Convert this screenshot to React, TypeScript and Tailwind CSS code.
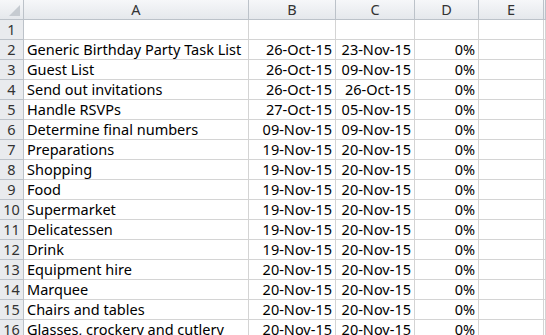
import React from 'react';

type Row = [string, string, string, string];

const rows: Row[] = [
  ['', '', '', ''],
  ['Generic Birthday Party Task List', '26-Oct-15', '23-Nov-15', '0%'],
  ['Guest List', '26-Oct-15', '09-Nov-15', '0%'],
  ['Send out invitations', '26-Oct-15', '26-Oct-15', '0%'],
  ['Handle RSVPs', '27-Oct-15', '05-Nov-15', '0%'],
  ['Determine final numbers', '09-Nov-15', '09-Nov-15', '0%'],
  ['Preparations', '19-Nov-15', '20-Nov-15', '0%'],
  ['Shopping', '19-Nov-15', '20-Nov-15', '0%'],
  ['Food', '19-Nov-15', '20-Nov-15', '0%'],
  ['Supermarket', '19-Nov-15', '20-Nov-15', '0%'],
  ['Delicatessen', '19-Nov-15', '20-Nov-15', '0%'],
  ['Drink', '19-Nov-15', '20-Nov-15', '0%'],
  ['Equipment hire', '20-Nov-15', '20-Nov-15', '0%'],
  ['Marquee', '20-Nov-15', '20-Nov-15', '0%'],
  ['Chairs and tables', '20-Nov-15', '20-Nov-15', '0%'],
  ['Glasses, crockery and cutlery', '20-Nov-15', '20-Nov-15', '0%'],
];

const cols = 'grid grid-cols-[24px_225px_87px_79px_64px_65px_1fr]';
const cell = 'h-[20px] border-r border-b border-[#d4d4d4] whitespace-nowrap overflow-hidden leading-[19px]';
const head = 'h-[20px] border-r border-b border-[#bcc2c9] bg-gradient-to-b from-[#f6f7f9] to-[#e5e8ec] text-[#333] text-center leading-[19px]';

export default function App() {
  return (
    <div className="w-[546px] h-[335px] overflow-hidden bg-white text-[14.5px] text-black" style={{ fontFamily: '"Noto Sans", "Open Sans", sans-serif' }}>
      {/* Column headers */}
      <div className={cols}>
        <div className={`${head} relative`}>
          <span className="absolute right-[3px] bottom-[3px] w-0 h-0 border-l-[11px] border-l-transparent border-b-[11px] border-b-[#c6cbd1]" />
        </div>
        {['A', 'B', 'C', 'D', 'E', ''].map((c, i) => (
          <div key={i} className={head}>{c}</div>
        ))}
      </div>

      {/* Rows */}
      {rows.map((r, i) => (
        <div key={i} className={cols}>
          <div className="h-[20px] border-r border-b border-[#bcc2c9] bg-[#e9ebee] text-[#333] text-center leading-[19px]">{i + 1}</div>
          <div className={`${cell} pl-[3px]`}>{r[0]}</div>
          <div className={`${cell} text-right pr-[3px]`}>{r[1]}</div>
          <div className={`${cell} text-right pr-[3px]`}>{r[2]}</div>
          <div className={`${cell} text-right pr-[3px]`}>{i === 0 ? '' : r[3]}</div>
          <div className={cell} />
          <div className={cell} />
        </div>
      ))}
    </div>
  );
}
